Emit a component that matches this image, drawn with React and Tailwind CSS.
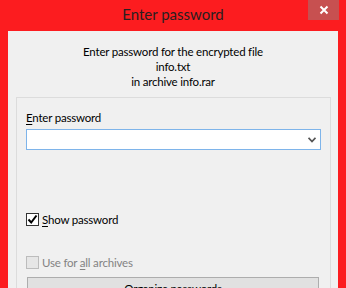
import React from 'react';

const font = { fontFamily: 'Lato, "Noto Sans", sans-serif' };

function Check({ checked, disabled }) {
  return (
    <span
      className={`flex items-center justify-center w-[13px] h-[13px] border ${
        disabled ? 'border-[#bcbcbc] bg-[#e6e6e6]' : 'border-[#333333] bg-white'
      }`}
    >
      {checked && (
        <svg width="11" height="11" viewBox="0 0 11 11">
          <path d="M1.5 5.5 L4.2 8.5 L9.5 1.5" fill="none" stroke="#000" strokeWidth="2" />
        </svg>
      )}
    </span>
  );
}

export default function App() {
  return (
    <div className="w-[346px] h-[288px] bg-[#fc1c1f] flex flex-col overflow-hidden text-[11.5px] tracking-[-0.2px]" style={font}>
      {/* Title bar */}
      <div className="relative h-[31px] flex items-center justify-center shrink-0">
        <span className="text-[15px] tracking-normal text-[#2a1f1f] leading-none -mt-[2px]">Enter password</span>
        <button className="absolute top-0 right-[7px] w-[31px] h-[20px] bg-[#c75050] flex items-center justify-center">
          <svg width="10" height="10" viewBox="0 0 10 10">
            <path d="M1.5 1.5 L8.5 8.5 M8.5 1.5 L1.5 8.5" stroke="#fff" strokeWidth="2" />
          </svg>
        </button>
      </div>

      {/* Client area */}
      <div className="flex-1 mx-[8px] bg-[#f0f0f0] overflow-hidden">
        <div className="pt-[13px] leading-[15px] text-center text-black">
          <div>Enter password for the encrypted file</div>
          <div>info.txt</div>
          <div>in archive info.rar</div>
        </div>

        <div className="mt-[8px] ml-[8px] mr-[7px] border-t border-l border-r border-[#dcdcdc] h-[200px] px-[9px] pt-[12px]">
          <div className="leading-[15px] text-black">
            <span className="underline underline-offset-2">E</span>nter password
          </div>
          <div className="mt-[4px] h-[21px] bg-white border border-[#7eb4ea] flex items-center justify-end pr-[4px]">
            <svg width="8" height="6" viewBox="0 0 8 6">
              <path d="M0.5 0.8 L4 4.5 L7.5 0.8" fill="none" stroke="#555" strokeWidth="1.8" />
            </svg>
          </div>

          <div className="mt-[62px] h-[15px] flex items-center gap-[3px] text-black">
            <Check checked />
            <span className="leading-[15px]">
              <span className="underline underline-offset-2">S</span>how password
            </span>
          </div>

          <div className="mt-[28px] h-[15px] flex items-center gap-[3px] text-[#838383]">
            <Check disabled />
            <span className="leading-[15px]">
              Use for <span className="underline underline-offset-2">a</span>ll archives
            </span>
          </div>

          <button className="mt-[7px] ml-[1px] w-[292px] h-[23px] border border-[#adadad] bg-[#e1e1e1] text-black leading-[21px] text-center">
            Organize passwords
          </button>
        </div>
      </div>
    </div>
  );
}
